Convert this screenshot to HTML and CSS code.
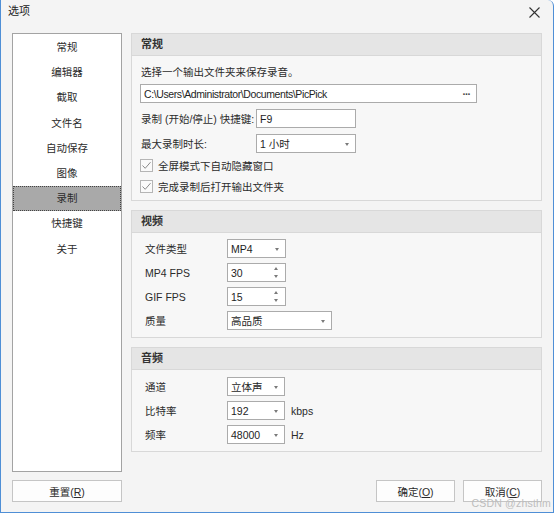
FILE: index.html
```html
<!DOCTYPE html>
<html lang="zh-CN">
<head>
    <meta charset="UTF-8">
    <title>选项</title>
    <link rel="stylesheet" href="styles.css">
</head>
<body>
    <div class="window">
        <div class="titlebar">
            <span class="title">选项</span>
            <svg class="close" width="11" height="11" viewBox="0 0 11 11"><path d="M0.5 0.5 L10.5 10.5 M10.5 0.5 L0.5 10.5" stroke="#333" stroke-width="1.1"/></svg>
        </div>

        <div class="main">
            <ul class="nav">
                <li>常规</li>
                <li>编辑器</li>
                <li>截取</li>
                <li>文件名</li>
                <li>自动保存</li>
                <li>图像</li>
                <li class="active">录制</li>
                <li>快捷键</li>
                <li>关于</li>
            </ul>

            <div class="panel">
                <div class="section sec-general">
                    <div class="sec-head">常规</div>
                    <div class="sec-body">
                        <div class="desc">选择一个输出文件夹来保存录音。</div>
                        <div class="field path"><span class="path-text">C:\Users\Administrator\Documents\PicPick</span><span class="dots">···</span></div>
                        <div class="row">
                            <span class="label wide">录制 (开始/停止) 快捷键:</span>
                            <div class="field w100"><span>F9</span></div>
                        </div>
                        <div class="row">
                            <span class="label wide">最大录制时长:</span>
                            <div class="field w100"><span>1 小时</span><i class="arrow"></i></div>
                        </div>
                        <div class="check">
                            <span class="box"><svg width="11" height="11" viewBox="0 0 11 11"><path d="M1.5 5.5 L4.2 8.3 L9.5 2.2" fill="none" stroke="#8a8a8a" stroke-width="1"/></svg></span>
                            全屏模式下自动隐藏窗口
                        </div>
                        <div class="check">
                            <span class="box"><svg width="11" height="11" viewBox="0 0 11 11"><path d="M1.5 5.5 L4.2 8.3 L9.5 2.2" fill="none" stroke="#8a8a8a" stroke-width="1"/></svg></span>
                            完成录制后打开输出文件夹
                        </div>
                    </div>
                </div>

                <div class="section sec-video">
                    <div class="sec-head">视频</div>
                    <div class="sec-body">
                        <div class="row">
                            <span class="label">文件类型</span>
                            <div class="field w59"><span>MP4</span><i class="arrow"></i></div>
                        </div>
                        <div class="row">
                            <span class="label">MP4 FPS</span>
                            <div class="field w59"><span>30</span><i class="spin"></i></div>
                        </div>
                        <div class="row">
                            <span class="label">GIF FPS</span>
                            <div class="field w59"><span>15</span><i class="spin"></i></div>
                        </div>
                        <div class="row">
                            <span class="label">质量</span>
                            <div class="field w105"><span>高品质</span><i class="arrow"></i></div>
                        </div>
                    </div>
                </div>

                <div class="section sec-audio">
                    <div class="sec-head">音频</div>
                    <div class="sec-body">
                        <div class="row">
                            <span class="label">通道</span>
                            <div class="field w58"><span>立体声</span><i class="arrow"></i></div>
                        </div>
                        <div class="row">
                            <span class="label">比特率</span>
                            <div class="field w58"><span>192</span><i class="arrow"></i></div>
                            <span class="unit">kbps</span>
                        </div>
                        <div class="row">
                            <span class="label">频率</span>
                            <div class="field w58"><span>48000</span><i class="arrow"></i></div>
                            <span class="unit">Hz</span>
                        </div>
                    </div>
                </div>
            </div>
        </div>

        <div class="buttons">
            <button class="btn reset">重置(<u>R</u>)</button>
            <div class="right-btns">
                <button class="btn">确定(<u>O</u>)</button>
                <button class="btn">取消(<u>C</u>)</button>
            </div>
        </div>

        <div class="watermark">CSDN @zhsthm</div>
    </div>
</body>
</html>
```

FILE: styles.css
```css
* {
    box-sizing: border-box;
}
body {
    margin: 0;
    background: #ffffff;
    font-family: "Liberation Sans", "Noto Sans CJK SC", sans-serif;
    font-size: 10.5px;
    color: #2b2b2b;
}
.window {
    position: relative;
    width: 554px;
    height: 513px;
    background: #f4f4f4;
    border: 1px solid #4f8fd6;
    border-top: none;
    border-top-right-radius: 6px;
    padding: 0 11px;
    display: flex;
    flex-direction: column;
}
.titlebar {
    height: 33px;
    margin: 0 -11px;
    padding: 3px 13px 0 7px;
    display: flex;
    justify-content: space-between;
    align-items: flex-start;
}
.title {
    line-height: 16px;
    font-size: 11px;
    color: #222;
}
.close {
    margin-top: 4px;
}
.main {
    display: flex;
    gap: 9px;
    height: 439px;
}
.nav {
    list-style: none;
    margin: 0;
    padding: 1px 0 0;
    width: 110px;
    background: #fff;
    border: 1px solid #a3a3a3;
}
.nav li {
    height: 25.2px;
    line-height: 25px;
    text-align: center;
}
.nav li.active {
    background: #a9a9a9;
    border: 1px dotted #444;
    line-height: 23px;
}
.panel {
    width: 411px;
    display: flex;
    flex-direction: column;
    gap: 9px;
}
.section {
    background: #f7f7f7;
    border: 1px solid #d8d8d8;
}
.sec-head {
    height: 22px;
    line-height: 21px;
    padding-left: 9px;
    background: #e5e5e5;
    border-bottom: 1px solid #d8d8d8;
    font-weight: bold;
    font-size: 11px;
    color: #333;
}
.sec-body {
    display: flex;
    flex-direction: column;
    padding: 0 8px;
}
.sec-general .sec-body {
    padding-top: 8px;
    padding-bottom: 5px;
}
.sec-video .sec-body {
    padding: 6px 12px 7px;
    gap: 5px;
}
.sec-audio .sec-body {
    padding: 7px 12px 7px;
    gap: 5px;
}
.desc {
    height: 16px;
    line-height: 16px;
    padding-left: 1px;
}
.field {
    position: relative;
    height: 19px;
    background: #fff;
    border: 1px solid #ababab;
    display: flex;
    align-items: center;
    padding-left: 3px;
    color: #1e1e1e;
}
.path {
    margin-top: 4px;
    width: 337px;
    justify-content: space-between;
    padding-right: 6px;
}
.path-text {
    letter-spacing: -0.4px;
}
.dots {
    letter-spacing: -1px;
    font-weight: bold;
    color: #444;
}
.row {
    display: flex;
    align-items: center;
    height: 19px;
}
.sec-general .row {
    margin-top: 6px;
}
.label {
    width: 83px;
    padding-left: 1px;
}
.label.wide {
    width: 116px;
}
.w100 { width: 100px; }
.w59 { width: 59px; }
.w58 { width: 58px; }
.w105 { width: 105px; }
.unit {
    margin-left: 6px;
}
.arrow {
    position: absolute;
    right: 6px;
    top: 8px;
    width: 0;
    height: 0;
    border-left: 2.5px solid transparent;
    border-right: 2.5px solid transparent;
    border-top: 3px solid #7a7a7a;
}
.spin {
    position: absolute;
    right: 6px;
    top: 3px;
    width: 5px;
    height: 11px;
}
.spin::before,
.spin::after {
    content: "";
    position: absolute;
    left: 0;
    border-left: 2.5px solid transparent;
    border-right: 2.5px solid transparent;
}
.spin::before {
    top: 0;
    border-bottom: 3px solid #7a7a7a;
}
.spin::after {
    bottom: 0;
    border-top: 3px solid #7a7a7a;
}
.check {
    display: flex;
    align-items: center;
    height: 18px;
    margin-top: 3px;
    gap: 5px;
}
.check + .check {
    margin-top: 3px;
}
.box {
    width: 13px;
    height: 13px;
    border: 1px solid #b5b5b5;
    background: #fafafa;
    display: flex;
    align-items: center;
    justify-content: center;
}
.buttons {
    margin-top: 8px;
    display: flex;
    justify-content: space-between;
}
.right-btns {
    display: flex;
    gap: 8px;
}
.btn {
    height: 22px;
    width: 79px;
    background: #fdfdfd;
    border: 1px solid #c5c5c5;
    font-family: inherit;
    font-size: 10.5px;
    color: #2b2b2b;
    padding: 0;
}
.btn.reset {
    width: 110px;
}
.watermark {
    position: absolute;
    right: 2px;
    bottom: 3px;
    font-family: "Liberation Sans", sans-serif;
    font-size: 10.5px;
    color: #bdbdbd;
    letter-spacing: 0.2px;
}
```
